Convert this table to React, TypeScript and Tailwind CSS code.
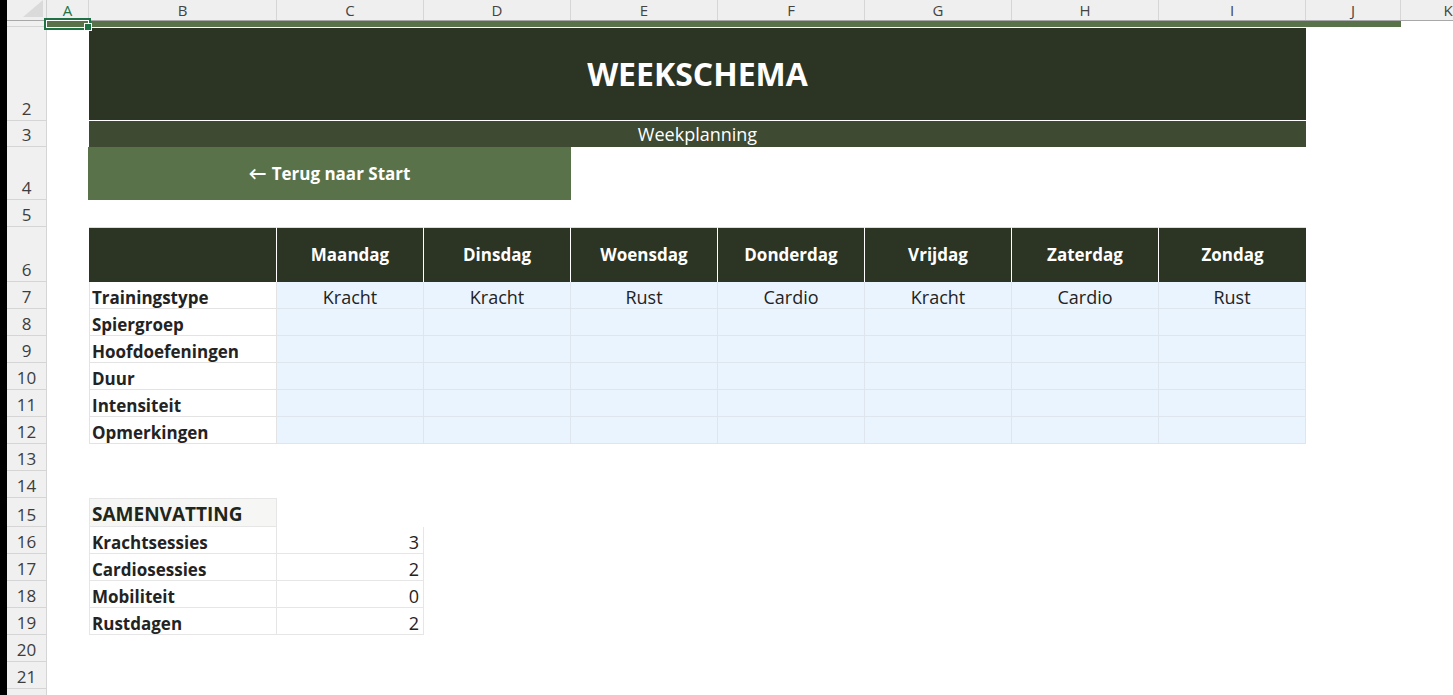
import React from 'react'

const days = ['Maandag', 'Dinsdag', 'Woensdag', 'Donderdag', 'Vrijdag', 'Zaterdag', 'Zondag']
const types = ['Kracht', 'Kracht', 'Rust', 'Cardio', 'Kracht', 'Cardio', 'Rust']
const labels = ['Spiergroep', 'Hoofdoefeningen', 'Duur', 'Intensiteit', 'Opmerkingen']
const summary = [
  { label: 'Krachtsessies', value: 3 },
  { label: 'Cardiosessies', value: 2 },
  { label: 'Mobiliteit', value: 0 },
  { label: 'Rustdagen', value: 2 },
]

function Row({
  n,
  h,
  children,
}: {
  n?: number
  h: string
  children?: React.ReactNode
}) {
  return (
    <div className={`flex shrink-0 ${h}`}>
      <div className="flex w-[40px] shrink-0 items-end justify-center overflow-hidden border-r border-b border-[#d5d5d5] bg-[#f0f0f0] text-[17px] leading-[22px] text-[#3d3d3d]">
        {n}
      </div>
      <div className="w-[42px] shrink-0" />
      {children}
    </div>
  )
}

function ColumnHeader() {
  const cols = [
    { l: 'A', w: 'w-[42px]', active: true },
    { l: 'B', w: 'w-[188px]' },
    { l: 'C', w: 'w-[147px]' },
    { l: 'D', w: 'w-[147px]' },
    { l: 'E', w: 'w-[147px]' },
    { l: 'F', w: 'w-[147px]' },
    { l: 'G', w: 'w-[147px]' },
    { l: 'H', w: 'w-[147px]' },
    { l: 'I', w: 'w-[147px]' },
    { l: 'J', w: 'w-[95px]' },
    { l: 'K', w: 'w-[95px]' },
  ]
  return (
    <div className="flex h-[21px] shrink-0 border-b border-[#a8a8a8] bg-[#efefef]">
      <div className="relative w-[40px] shrink-0 border-r border-[#d0d0d0]">
        <svg className="absolute top-0 right-[3px]" width="20" height="17" viewBox="0 0 20 17">
          <polygon points="20,0 20,17 0,17" fill="#dadada" />
        </svg>
      </div>
      {cols.map((c) => (
        <div
          key={c.l}
          className={`${c.w} shrink-0 border-r border-[#d6d6d6] text-center text-[15px] leading-[20px] ${
            c.active ? 'text-[#217346]' : 'text-[#444]'
          }`}
        >
          {c.l}
        </div>
      ))}
    </div>
  )
}

export default function App() {
  return (
    <div className="flex h-[695px] w-full overflow-hidden bg-white font-['Open_Sans',sans-serif] text-[#232323]">
      <div className="w-[7px] shrink-0 bg-black" />
      <div className="relative flex min-w-0 flex-1 flex-col">
        <ColumnHeader />

        {/* rij 1 */}
        <Row h="h-[6px]">
          <div className="w-[1312px] shrink-0 bg-[#5a7249]" />
        </Row>

        {/* rij 2: titel */}
        <Row n={2} h="h-[94px]">
          <div className="flex w-[1217px] shrink-0 items-center justify-center border-y border-white bg-[#2c3424] text-[32px] font-bold text-white">
            WEEKSCHEMA
          </div>
        </Row>

        <Row n={3} h="h-[26px]">
          <div className="flex w-[1217px] shrink-0 items-center justify-center bg-[#3e4a32] text-[18px] leading-[24px] text-white">
            Weekplanning
          </div>
        </Row>

        <Row n={4} h="h-[53px]">
          <div className="-ml-[1px] flex w-[483px] shrink-0 items-center justify-center gap-[5px] bg-[#5a7249] text-[17px] font-bold text-white">
            <span className="font-['Lato',sans-serif] text-[18px]">←</span>
            <span>Terug naar Start</span>
          </div>
        </Row>

        <Row n={5} h="h-[27px]" />

        {/* weektabel */}
        <Row n={6} h="h-[55px]">
          <div className="w-[188px] shrink-0 border-t border-r border-[#dcdcdc] border-r-white bg-[#2c3424]" />
          {days.map((d, i) => (
            <div
              key={d}
              className={`flex w-[147px] shrink-0 items-center justify-center border-t border-[#dcdcdc] bg-[#2c3424] text-[17px] font-bold text-white ${
                i < 6 ? 'border-r border-r-white' : ''
              }`}
            >
              {d}
            </div>
          ))}
        </Row>

        <Row n={7} h="h-[27px]">
          <div className="flex w-[188px] shrink-0 items-end border-x border-b border-[#e3e3e3] pl-[2px] text-[17px] leading-[21px] font-bold">
            Trainingstype
          </div>
          {types.map((t, i) => (
            <div
              key={i}
              className="flex w-[147px] shrink-0 items-end justify-center border-r border-b border-[#dfe5ec] bg-[#eaf4fe] text-[18px] leading-[22px]"
            >
              {t}
            </div>
          ))}
        </Row>

        {labels.map((l, r) => (
          <Row key={l} n={8 + r} h="h-[27px]">
            <div className="flex w-[188px] shrink-0 items-end border-x border-b border-[#e3e3e3] pl-[2px] text-[17px] leading-[21px] font-bold">
              {l}
            </div>
            {days.map((d) => (
              <div key={d} className="w-[147px] shrink-0 border-r border-b border-[#dfe5ec] bg-[#eaf4fe]" />
            ))}
          </Row>
        ))}

        <Row n={13} h="h-[27px]" />
        <Row n={14} h="h-[27px]" />

        {/* samenvatting */}
        <Row n={15} h="h-[29px]">
          <div className="flex w-[188px] shrink-0 items-end border border-[#e6e6e6] bg-[#f6f6f4] pl-[2px] text-[19px] leading-[24px] font-bold text-[#1f261b]">
            SAMENVATTING
          </div>
        </Row>

        {summary.map((s, i) => (
          <Row key={s.label} n={16 + i} h="h-[27px]">
            <div className="flex w-[188px] shrink-0 items-end border-x border-b border-[#e6e6e6] pl-[2px] text-[17px] leading-[21px] font-bold">
              {s.label}
            </div>
            <div className="flex w-[147px] shrink-0 items-end justify-end border-r border-b border-[#e6e6e6] pr-[4px] text-[18px] leading-[22px]">
              {s.value}
            </div>
          </Row>
        ))}

        <Row n={20} h="h-[27px]" />
        <Row n={21} h="h-[27px]" />
        <Row h="h-[27px]" />

        {/* selectie A1 */}
        <div className="absolute top-[18px] left-[37px] h-[12px] w-[47px] border-2 border-[#1e7145] bg-white p-[1px]">
          <div className="h-full w-full bg-[#5a7249]" />
        </div>
        <div className="absolute top-[23px] left-[77px] h-[8px] w-[8px] border border-white bg-[#1e7145]" />
      </div>
    </div>
  )
}
